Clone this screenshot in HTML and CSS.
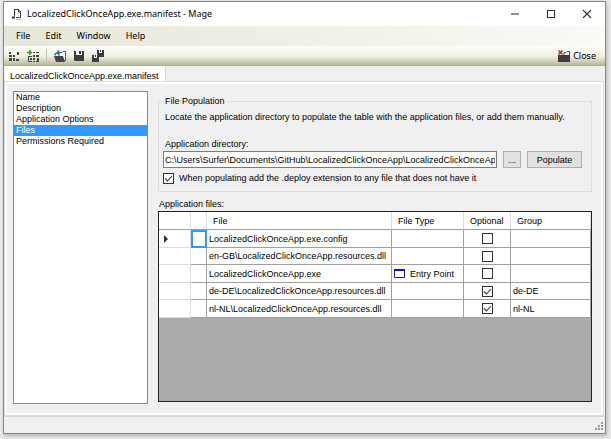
FILE: index.html
```html
<!DOCTYPE html>
<html lang="en">
<head>
    <meta charset="UTF-8">
    <meta name="viewport" content="width=device-width, initial-scale=1.0">
    <title>LocalizedClickOnceApp.exe.manifest - Mage</title>
    <link rel="stylesheet" href="styles.css">
</head>
<body>

<div class="window">
    <!-- Title bar -->
    <header class="title-bar">
        <svg class="app-icon" width="11" height="12" viewBox="0 0 11 12">
            <path d="M3.5 1.5V8M3 1.5h4.5l2 2v6H5" fill="none" stroke="#444" stroke-width="1"/>
            <path d="M7.5 1v3H10" fill="none" stroke="#444"/>
            <path d="M1 8.5h3v2H1z" fill="#333"/>
            <path d="M5 11.5h5" stroke="#bbb"/>
        </svg>
        <h1 class="title">LocalizedClickOnceApp.exe.manifest - Mage</h1>
        <div class="window-buttons">
            <button type="button" class="window-button" aria-label="Minimize">
                <svg width="10" height="10" viewBox="0 0 10 10"><path d="M1 5h8" stroke="#777" stroke-width="1.6"/></svg>
            </button>
            <button type="button" class="window-button" aria-label="Maximize">
                <svg width="10" height="10" viewBox="0 0 10 10"><path d="M1.5 1.5h7v7h-7z" fill="none" stroke="#333" stroke-width="1.1"/></svg>
            </button>
            <button type="button" class="window-button" aria-label="Close window">
                <svg width="10" height="10" viewBox="0 0 10 10"><path d="M1 1l8 8M9 1l-8 8" stroke="#333" stroke-width="1.1"/></svg>
            </button>
        </div>
    </header>

    <!-- Menu -->
    <nav class="menu-bar">
        <button type="button" class="menu-item">File</button>
        <button type="button" class="menu-item">Edit</button>
        <button type="button" class="menu-item">Window</button>
        <button type="button" class="menu-item">Help</button>
    </nav>

    <!-- Toolbar -->
    <div class="toolbar">
        <button type="button" class="tool" aria-label="New application manifest">
            <svg width="12" height="12" viewBox="0 0 12 12" fill="#444">
                <path d="M1 2h2v2H1zM1 5h3v2H1zM5 5h2v2H5zM9 2h2v3H9zM1 8h3v3H1zM5 8h2v3H5zM8 9h3v2H8z"/>
            </svg>
        </button>
        <button type="button" class="tool" aria-label="New deployment manifest">
            <svg width="12" height="12" viewBox="0 0 12 12">
                <path d="M3 0v5M0 2.500h5" stroke="#2a9a2a" stroke-width="1.500"/>
                <path d="M6 2h2v1H6zM9 2h3v1H9zM1 6h1v6H1zM1 6h4v1H1zM3 8h2v2H3zM1 11h4v1H1zM6 5h2v2H6zM9 5h3v2H9zM6 8h2v2H6zM6 11h2v1H6zM10 8h2v4H9v-1h1z" fill="#444"/>
            </svg>
        </button>
        <span class="separator"></span>
        <button type="button" class="tool" aria-label="Open">
            <svg width="12" height="12" viewBox="0 0 12 12">
                <path d="M5 2.500h3l1-1h2.500v9H5z" fill="#fff" stroke="#555"/>
                <path d="M0 6h9l2 6H2z" fill="#444"/>
                <path d="M1 5.500Q1 2.500 5 2.500M3.500.5l2 2-2 2" fill="none" stroke="#1a78b8" stroke-width="1.400"/>
            </svg>
        </button>
        <button type="button" class="tool" aria-label="Save">
            <svg width="12" height="12" viewBox="0 0 12 12">
                <path d="M1 1h10v10H2l-1-1z" fill="#3c3c3c"/>
                <path d="M3 1h6v4H3z" fill="#f6f6f0"/>
                <path d="M6 1h2v3H6z" fill="#3c3c3c"/>
            </svg>
        </button>
        <button type="button" class="tool" aria-label="Save all">
            <svg width="12" height="12" viewBox="0 0 12 12">
                <path d="M5 0h7v7H5zM0 5h7v7H0z" fill="#3c3c3c"/>
                <path d="M7 0h3v3H7zM2 5h3v3H2z" fill="#f6f6f0"/>
                <path d="M8 0h1v2H8zM3 5h1v2H3z" fill="#3c3c3c"/>
            </svg>
        </button>
        <button type="button" class="tool close-tool">
            <svg width="12" height="12" viewBox="0 0 12 12">
                <path d="M6 2.500h2l1-1h2.500v4H6z" fill="#eee" stroke="#555"/>
                <path d="M0 5h12v7H0z" fill="#3c3c3c"/>
                <path d="M.5.5l4 4M4.500.5l-4 4" stroke="#c03018" stroke-width="1.500"/>
            </svg>
            Close
        </button>
    </div>

    <!-- Document tabs -->
    <div class="tabs" role="tablist">
        <button type="button" class="tab" role="tab" aria-selected="true">LocalizedClickOnceApp.exe.manifest</button>
    </div>

    <main class="tab-page">
        <select class="page-list" size="5" aria-label="Manifest pages">
            <option>Name</option>
            <option>Description</option>
            <option>Application Options</option>
            <option selected>Files</option>
            <option>Permissions Required</option>
        </select>

        <section class="files-page">
            <fieldset class="group">
                <legend>File Population</legend>
                <p class="hint">Locate the application directory to populate the table with the application files, or add them manually.</p>
                <label class="dir-label" for="directory">Application directory:</label>
                <div class="dir-row">
                    <input type="text" id="directory" class="dir-input" value="C:\Users\Surfer\Documents\GitHub\LocalizedClickOnceApp\LocalizedClickOnceApp\">
                    <button type="button" class="button browse" aria-label="Browse">...</button>
                    <button type="button" class="button populate">Populate</button>
                </div>
                <label class="deploy-row">
                    <input type="checkbox" class="check" checked>
                    When populating add the .deploy extension to any file that does not have it
                </label>
            </fieldset>

            <h2 class="files-label" id="files-label">Application files:</h2>
            <div class="grid">
                <table aria-labelledby="files-label">
                    <colgroup>
                        <col class="col-marker">
                        <col class="col-icon">
                        <col class="col-file">
                        <col class="col-type">
                        <col class="col-optional">
                        <col class="col-group">
                    </colgroup>
                    <thead>
                        <tr><th></th><th></th><th>File</th><th>File Type</th><th>Optional</th><th>Group</th></tr>
                    </thead>
                    <tbody>
                        <tr>
                            <td><svg class="row-arrow" width="4" height="8" viewBox="0 0 4 8"><path d="M0 0l4 4-4 4z" fill="#333"/></svg></td>
                            <td class="current"></td>
                            <td>LocalizedClickOnceApp.exe.config</td>
                            <td></td>
                            <td class="center"><input type="checkbox" class="check" aria-label="Optional"></td>
                            <td></td>
                        </tr>
                        <tr>
                            <td></td>
                            <td></td>
                            <td>en-GB\LocalizedClickOnceApp.resources.dll</td>
                            <td></td>
                            <td class="center"><input type="checkbox" class="check" aria-label="Optional"></td>
                            <td></td>
                        </tr>
                        <tr>
                            <td></td>
                            <td></td>
                            <td>LocalizedClickOnceApp.exe</td>
                            <td>
                                <span class="file-type">
                                    <svg width="11" height="9" viewBox="0 0 11 9"><path d="M.5.5h10v8H.5z" fill="#fff" stroke="#1c1ca0"/><path d="M0 0h11v2H0z" fill="#1414b4"/></svg>
                                    Entry Point
                                </span>
                            </td>
                            <td class="center"><input type="checkbox" class="check" aria-label="Optional"></td>
                            <td></td>
                        </tr>
                        <tr>
                            <td></td>
                            <td></td>
                            <td>de-DE\LocalizedClickOnceApp.resources.dll</td>
                            <td></td>
                            <td class="center"><input type="checkbox" class="check" aria-label="Optional" checked></td>
                            <td>de-DE</td>
                        </tr>
                        <tr>
                            <td></td>
                            <td></td>
                            <td>nl-NL\LocalizedClickOnceApp.resources.dll</td>
                            <td></td>
                            <td class="center"><input type="checkbox" class="check" aria-label="Optional" checked></td>
                            <td>nl-NL</td>
                        </tr>
                    </tbody>
                </table>
            </div>
        </section>
    </main>

    <!-- Status bar -->
    <footer class="status-bar">
        <svg width="9" height="9" viewBox="0 0 9 9" fill="#999">
            <path d="M7 0h2v2H7zM4 3h2v2H4zM7 3h2v2H7zM1 6h2v2H1zM4 6h2v2H4zM7 6h2v2H7z"/>
        </svg>
    </footer>
</div>

</body>
</html>
```

FILE: styles.css
```css
* {
    box-sizing: border-box;
}

body {
    margin: 0;
    padding: 1px 5px 5px 3px;
    height: 100vh;
    display: flex;
    background-color: #ebebeb;
    font-family: "Liberation Sans", Arial, sans-serif;
    font-size: 9px;
    line-height: 12px;
    color: #000;
}

button,
input,
select {
    font: inherit;
    color: inherit;
}

button {
    padding: 0;
    border: none;
    background: none;
}

.window {
    flex: 1;
    min-width: 0;
    display: flex;
    flex-direction: column;
    background-color: #f0f0f0;
    border: 1px solid #4a9ad8;
    box-shadow: 1px 2px 4px rgba(0, 0, 0, 0.25);
}

/* Title bar */
.title-bar {
    height: 24px;
    display: flex;
    align-items: center;
    padding-left: 7px;
    background-color: #fff;
    font-family: "Noto Sans", "Open Sans", sans-serif;
}

.title {
    flex: 1;
    margin: 0 0 0 5px;
    font-size: 9px;
    font-weight: normal;
}

.window-buttons {
    display: flex;
}

.window-button {
    width: 36px;
    height: 24px;
    display: flex;
    align-items: center;
    justify-content: center;
}

/* Menu and toolbar */
.menu-bar {
    height: 20px;
    display: flex;
    align-items: center;
    gap: 15px;
    padding-left: 12px;
    background: linear-gradient(to right, #e6e6d8, #fafaf6);
    font-family: "Noto Sans", "Open Sans", sans-serif;
}

.toolbar {
    height: 20px;
    display: flex;
    align-items: center;
    gap: 7px;
    padding: 0 9px 0 4px;
    background: linear-gradient(#fdfdfa, #f0f0e4 50%, #b9b99c 95%, #a0a088);
    font-family: "Noto Sans", "Open Sans", sans-serif;
}

.tool {
    display: flex;
    align-items: center;
}

.separator {
    width: 1px;
    height: 14px;
    background-color: #c4c4b4;
}

.close-tool {
    gap: 3px;
    margin-left: auto;
}

/* Tabs */
.tabs {
    height: 16px;
    padding-left: 1px;
    display: flex;
}

.tab {
    padding: 4px 6px 0 5px;
    background-color: #fff;
    border-right: 1px solid #d9d9d9;
}

.tab-page {
    flex: 1;
    min-height: 0;
    display: flex;
    gap: 10px;
    margin: 0 2px 0 1px;
    padding: 7px 9px 9px 6px;
    border: 2px solid #fff;
    outline: 1px solid #dcdcdc;
}

.page-list {
    width: 135px;
    padding: 0;
    border: 1px solid #828790;
    border-radius: 0;
    outline: none;
    background-color: #fff;
    overflow: hidden;
}

.page-list option {
    min-height: 11px;
    padding: 0 2px;
    line-height: 11px;
}

.page-list option:checked {
    color: #fff;
    background: #3399ff linear-gradient(#3399ff, #3399ff);
}

/* Files page */
.files-page {
    flex: 1;
    min-width: 0;
    display: flex;
    flex-direction: column;
    padding-top: 4px;
    padding-bottom: 2px;
}

.group {
    margin: 0;
    padding: 4px 9px 7px 4px;
    min-width: 0;
    border: 1px solid #dcdcdc;
}

.group legend {
    padding: 0 2px;
}

.hint {
    margin: 0 0 15px 2px;
}

.dir-label {
    display: block;
    margin: 0 0 1px 2px;
}

.dir-row {
    display: flex;
    gap: 6px;
    margin-bottom: 4px;
}

.dir-input {
    flex: 1;
    min-width: 0;
    height: 17px;
    padding: 0 1px;
    border: 1px solid #7a7a7a;
    background-color: #fff;
}

.button {
    height: 17px;
    border: 1px solid #adadad;
    background-color: #e1e1e1;
}

.browse {
    width: 18px;
}

.populate {
    width: 55px;
}

.deploy-row {
    display: flex;
    align-items: center;
    gap: 5px;
}

.check {
    appearance: none;
    flex: none;
    width: 11px;
    height: 11px;
    margin: 0;
    border: 1px solid #333;
    background-color: #fff;
}

.check:checked {
    background-image: url("data:image/svg+xml,%3Csvg xmlns='http://www.w3.org/2000/svg' viewBox='0 0 9 9'%3E%3Cpath d='M1 4.500l2.500 2.500L8 2' fill='none' stroke='%23333' stroke-width='1.100'/%3E%3C/svg%3E");
}

.files-label {
    margin: 6px 0 1px 1px;
    font-size: 9px;
    font-weight: normal;
}

.grid {
    flex: 1;
    min-height: 0;
    border: 1px solid #222;
    background-color: #ababab;
}

.grid table {
    width: 100%;
    table-layout: fixed;
    border-collapse: separate;
    border-spacing: 0;
    background-color: #fff;
}

.grid th,
.grid td {
    height: 18px;
    padding: 0 2px;
    border-right: 1px solid #a0a0a0;
    border-bottom: 1px solid #a0a0a0;
    font-weight: normal;
    text-align: left;
    white-space: nowrap;
}

.grid tr:nth-child(even) td {
    height: 17px;
}

.grid th {
    padding-left: 6px;
    border-right-color: #dcdcdc;
}

.grid td:first-child {
    border-color: #dcdcdc;
}

.grid .current {
    border: 2px solid #3399ff;
}

.grid .center {
    text-align: center;
}

.grid .check {
    display: block;
    margin: 0 auto;
}

.col-marker {
    width: 32px;
}

.col-icon {
    width: 16px;
}

.col-file {
    width: 185px;
}

.col-type {
    width: 72px;
}

.col-optional {
    width: 47px;
}

.row-arrow {
    display: block;
    margin-left: 3px;
}

.file-type {
    display: flex;
    align-items: center;
    gap: 5px;
}

/* Status bar */
.status-bar {
    height: 17px;
    display: flex;
    align-items: flex-end;
    justify-content: flex-end;
    margin-top: 1px;
    padding: 0 2px 2px;
    border-top: 1px solid #d7d7d7;
}
```
